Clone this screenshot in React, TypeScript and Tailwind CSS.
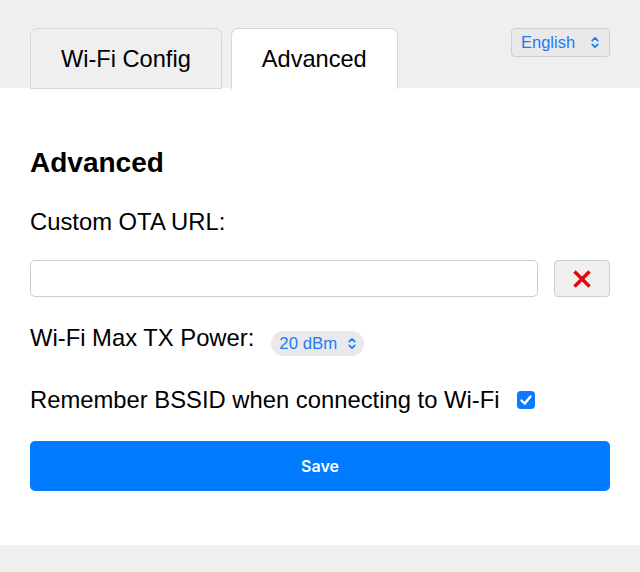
import React from "react";

function UpDown({ className }: { className?: string }) {
  return (
    <svg viewBox="0 0 10 14" className={className} fill="none" stroke="currentColor" strokeWidth="1.8" strokeLinecap="round" strokeLinejoin="round">
      <path d="M2 5 L5 2 L8 5" />
      <path d="M2 9 L5 12 L8 9" />
    </svg>
  );
}

export default function App() {
  return (
    <div className="w-[640px] h-[572px] bg-[#efefef] text-black" style={{ fontFamily: '"Liberation Sans", Arial, sans-serif' }}>
      <div className="flex items-start pt-[28px] px-[30px] border-b border-[#d6d6d6] h-[89px]">
        <div className="flex gap-[9px] items-start">
          <div className="h-[61px] px-[30px] pt-[2px] flex items-center justify-center text-[23.6px] bg-[#efefef] border border-[#d6d6d6] rounded-t-[7px]">
            Wi-Fi Config
          </div>
          <div className="h-[61px] px-[30px] pt-[2px] flex items-center justify-center text-[23.6px] bg-white border border-b-0 border-[#d6d6d6] rounded-t-[7px] relative z-10">
            Advanced
          </div>
        </div>
        <div className="ml-auto h-[29px] w-[99px] flex items-center pl-[9px] pr-[9px] bg-[#e9e9e9] border border-[#cfcfcf] rounded-[4px] text-[#1a7cf5] text-[16.5px]">
          <span>English</span>
          <UpDown className="ml-auto w-[10px] h-[13px]" />
        </div>
      </div>
      <div className="bg-white px-[30px] pt-[59px] pb-[54px] -mt-px">
        <div className="h-[32px] leading-[32px] text-[28px] font-bold">Advanced</div>
        <div className="mt-[29px] h-[28px] leading-[28px] text-[23.8px]">Custom OTA URL:</div>
        <div className="mt-[24px] flex gap-[16px]">
          <div className="h-[37px] flex-1 bg-white border border-[#cdcdcd] rounded-[5px]" />
          <div className="h-[37px] w-[56px] flex items-center justify-center bg-[#efefef] border border-[#cfcfcf] rounded-[4px]">
            <svg viewBox="0 0 20 20" className="w-[20px] h-[20px]" stroke="#e8000b" strokeWidth="3.4" strokeLinecap="butt">
              <path d="M2.5 2.5 L17.5 17.5" />
              <path d="M17.5 2.5 L2.5 17.5" />
            </svg>
          </div>
        </div>
        <div className="mt-[27px] flex items-start h-[31px]">
          <span className="h-[28px] leading-[28px] text-[23.8px]">Wi-Fi Max TX Power:</span>
          <div className="ml-[17px] mt-[7px] h-[25px] flex items-center pl-[8px] pr-[7px] bg-[#e9e9ed] rounded-full text-[#1a7cf5] text-[16.8px]">
            <span>20 dBm</span>
            <UpDown className="ml-[10px] w-[10px] h-[13px]" />
          </div>
        </div>
        <div className="mt-[31px] flex items-center h-[28px]">
          <span className="leading-[28px] text-[23.8px]">Remember BSSID when connecting to Wi-Fi</span>
          <div className="ml-[17px] w-[18px] h-[18px] rounded-[4px] bg-[#0a7aff] flex items-center justify-center">
            <svg viewBox="0 0 18 18" className="w-[18px] h-[18px]" fill="none" stroke="white" strokeWidth="2.4" strokeLinecap="round" strokeLinejoin="round">
              <path d="M4.5 9.5 L7.8 12.6 L13.5 5.5" />
            </svg>
          </div>
        </div>
        <button className="mt-[27px] w-full h-[50px] bg-[#007aff] rounded-[5px] text-white text-[16px] font-semibold" style={{ fontFamily: 'Inter, "Liberation Sans", sans-serif' }}>
          Save
        </button>
      </div>
    </div>
  );
}
